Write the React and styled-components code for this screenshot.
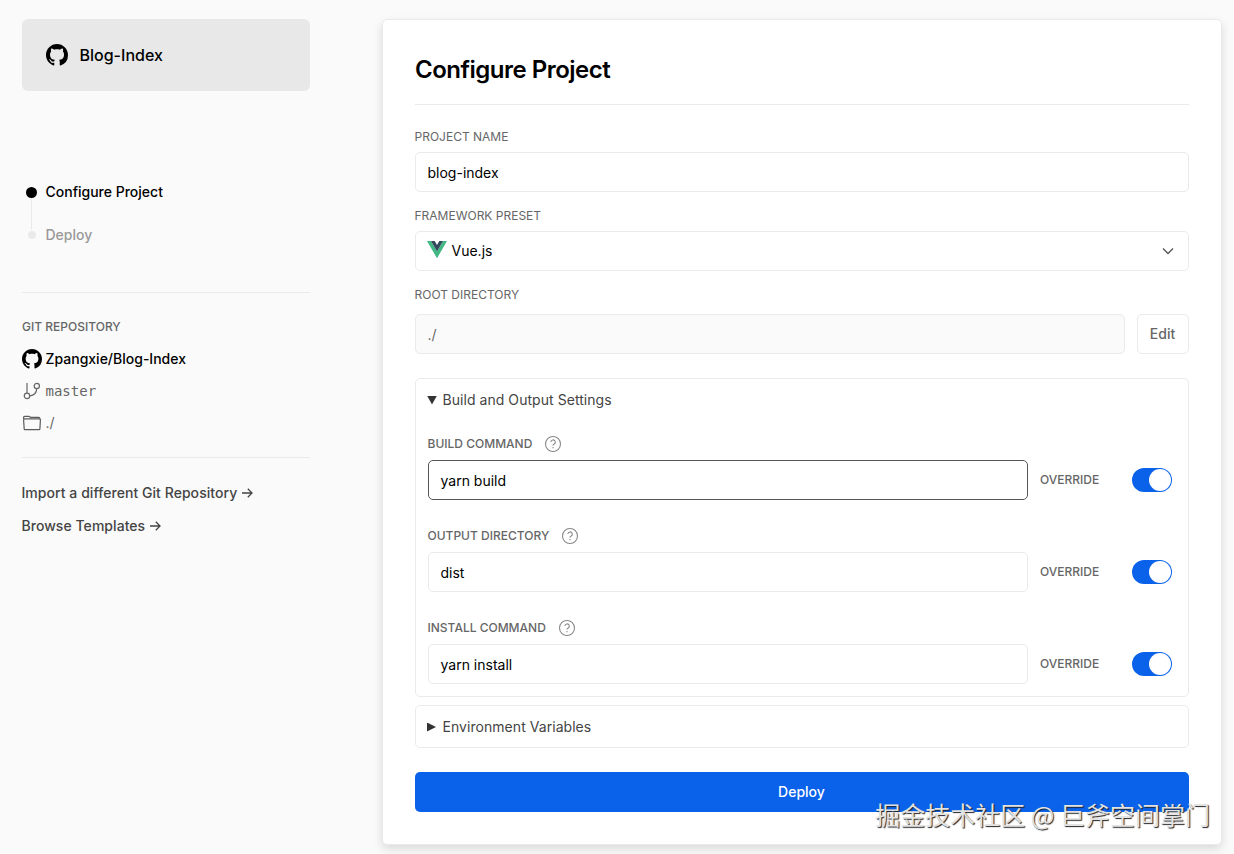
import React from "react";
import styled, { createGlobalStyle } from "styled-components";

const GithubIcon = ({ size }) => (
  <svg width={size} height={size} viewBox="0 0 16 16" fill="#000">
    <path
      fillRule="evenodd"
      d="M8 0C3.58 0 0 3.58 0 8c0 3.54 2.29 6.53 5.47 7.59.4.07.55-.17.55-.38 0-.19-.01-.82-.01-1.49-2.01.37-2.53-.49-2.69-.94-.09-.23-.48-.94-.82-1.13-.28-.15-.68-.52-.01-.53.63-.01 1.08.58 1.23.82.72 1.21 1.87.87 2.33.66.07-.52.28-.87.51-1.07-1.78-.2-3.64-.89-3.64-3.95 0-.87.31-1.59.82-2.15-.08-.2-.36-1.02.08-2.12 0 0 .67-.21 2.2.82.64-.18 1.32-.27 2-.27s1.36.09 2 .27c1.53-1.04 2.2-.82 2.2-.82.44 1.1.16 1.92.08 2.12.51.56.82 1.27.82 2.15 0 3.07-1.87 3.75-3.65 3.95.29.25.54.73.54 1.48 0 1.07-.01 1.93-.01 2.2 0 .21.15.46.55.38A8.01 8.01 0 0 0 16 8c0-4.42-3.58-8-8-8z"
    />
  </svg>
);

const BranchIcon = () => (
  <svg width="20" height="20" viewBox="0 0 20 20" fill="none" stroke="#666" strokeWidth="1.2">
    <path d="M5 2v10.2M14.7 7.6c-.2 4.2-2.6 6.8-6.8 7.2" />
    <circle cx="14.8" cy="5" r="2.6" />
    <circle cx="5" cy="14.9" r="2.7" />
  </svg>
);

const FolderIcon = () => (
  <svg width="20" height="20" viewBox="0 0 20 20" fill="none" stroke="#5c5c5c" strokeWidth="1.2">
    <path d="M1.6 6V4.4q0-1.1 1.1-1.1h4.2l1.6 1h8.2q1.1 0 1.1 1.1V6" />
    <path d="M2.2 15.9L1.6 7q0-1.1 1.1-1.1h14.7q1.1 0 1 1.1l-.5 8.9q0 .8-.9.8H3.1q-.9 0-.9-.8z" />
  </svg>
);

const ArrowIcon = () => (
  <svg width="12" height="12" viewBox="0 0 12 12" fill="none" stroke="#444" strokeWidth="1.3">
    <path d="M1 6h10M6.8 1.8L11 6l-4.2 4.2" />
  </svg>
);

const VueIcon = () => (
  <svg width="20" height="18" viewBox="0 0 20 18">
    <path fill="#41b883" d="M0 0h4l6 10.4L16 0h4L10 17.3z" />
    <path fill="#35495e" d="M4 0h3.7L10 4l2.3-4H16l-6 10.4z" />
  </svg>
);

const ChevronIcon = () => (
  <svg width="12" height="12" viewBox="0 0 12 12" fill="none" stroke="#555" strokeWidth="1.3">
    <path d="M1 3.5l5 5 5-5" />
  </svg>
);

const HelpIcon = () => (
  <svg width="18" height="18" viewBox="0 0 18 18" fill="none" stroke="#888" strokeWidth="1.1">
    <circle cx="9" cy="9" r="7.5" />
    <path d="M6.9 7.1a2.2 2.2 0 1 1 3.3 1.9c-.8.4-1.2.8-1.2 1.5" />
    <path d="M9 11.9v1.3" />
  </svg>
);

const settings = [
  { label: "BUILD COMMAND", value: "yarn build", focused: true },
  { label: "OUTPUT DIRECTORY", value: "dist" },
  { label: "INSTALL COMMAND", value: "yarn install" },
];

const Setting = ({ data }) => (
  <SettingContainer>
    <SettingLabel>
      <span>{data.label}</span>
      <HelpIcon />
    </SettingLabel>
    <SettingRow>
      <Field $focused={data.focused}>{data.value}</Field>
      <Override>OVERRIDE</Override>
      <Toggle>
        <Knob />
      </Toggle>
    </SettingRow>
  </SettingContainer>
);

const Sidebar = () => (
  <SidebarContainer>
    <RepoBox>
      <GithubIcon size={22} />
      <span>Blog-Index</span>
    </RepoBox>
    <Steps>
      <Step $active>
        <DotWrapper>
          <Dot $active />
        </DotWrapper>
        <span>Configure Project</span>
      </Step>
      <StepLine />
      <Step>
        <DotWrapper>
          <Dot />
        </DotWrapper>
        <span>Deploy</span>
      </Step>
    </Steps>
    <RepoInfo>
      <RepoHeading>GIT REPOSITORY</RepoHeading>
      <RepoName>
        <GithubIcon size={20} />
        <span>Zpangxie/Blog-Index</span>
      </RepoName>
      <RepoMeta>
        <BranchIcon />
        <Branch>master</Branch>
      </RepoMeta>
      <RepoMeta>
        <FolderIcon />
        <span>./</span>
      </RepoMeta>
    </RepoInfo>
    <Links>
      <SideLink>
        <span>Import a different Git Repository</span>
        <ArrowIcon />
      </SideLink>
      <SideLink>
        <span>Browse Templates</span>
        <ArrowIcon />
      </SideLink>
    </Links>
  </SidebarContainer>
);

const App = () => (
  <Page>
    <GlobalStyle />
    <Sidebar />
    <Card>
      <Title>Configure Project</Title>
      <Label>PROJECT NAME</Label>
      <Field>blog-index</Field>
      <Label>FRAMEWORK PRESET</Label>
      <Select>
        <VueIcon />
        <span>Vue.js</span>
        <ChevronIcon />
      </Select>
      <Label>ROOT DIRECTORY</Label>
      <DirectoryRow>
        <Field $disabled>./</Field>
        <EditButton>Edit</EditButton>
      </DirectoryRow>
      <SettingsPanel>
        <Summary>
          <Triangle $open />
          <span>Build and Output Settings</span>
        </Summary>
        {settings.map((item) => (
          <Setting key={item.label} data={item} />
        ))}
      </SettingsPanel>
      <EnvPanel>
        <Summary>
          <Triangle />
          <span>Environment Variables</span>
        </Summary>
      </EnvPanel>
      <DeployButton>Deploy</DeployButton>
    </Card>
    <Watermark>掘金技术社区 @ 巨斧空间掌门</Watermark>
  </Page>
);

export default App;

const GlobalStyle = createGlobalStyle`
  * {
    box-sizing: border-box;
  }
  body {
    margin: 0;
    background: #fafafa;
    font-family: Inter, "Liberation Sans", sans-serif;
    font-size: 14px;
    overflow: hidden;
  }
  svg {
    display: block;
    flex: none;
  }
`;

const Page = styled.div`
  position: relative;
  display: flex;
  align-items: flex-start;
  gap: 72px;
  width: 1234px;
  height: 854px;
  padding: 19px 12px 0 22px;
  overflow: hidden;
`;

const SidebarContainer = styled.aside`
  width: 288px;
  flex: none;
`;

const RepoBox = styled.div`
  display: flex;
  align-items: center;
  gap: 11.5px;
  height: 72px;
  padding-left: 24px;
  border-radius: 6px;
  background: #e8e8e8;
  font-size: 16px;
  font-weight: 500;
`;

const Steps = styled.div`
  height: 202px;
  padding-top: 91px;
  border-bottom: 1px solid #eaeaea;
`;

const Step = styled.div`
  display: flex;
  align-items: center;
  gap: 4.5px;
  height: 20px;
  font-weight: 500;
  color: ${(props) => (props.$active ? "#000" : "#999")};

  span {
    padding-bottom: 2px;
  }
`;

const DotWrapper = styled.div`
  display: flex;
  justify-content: center;
  width: 19px;
`;

const Dot = styled.div`
  width: ${(props) => (props.$active ? 11 : 8)}px;
  height: ${(props) => (props.$active ? 11 : 8)}px;
  border-radius: 50%;
  background: ${(props) => (props.$active ? "#000" : "#eaeaea")};
`;

const StepLine = styled.div`
  width: 1px;
  height: 33px;
  margin: -5px 0 -5px 9px;
  background: #eaeaea;
`;

const RepoInfo = styled.div`
  display: flex;
  flex-direction: column;
  gap: 12px;
  height: 165px;
  padding-top: 24px;
  border-bottom: 1px solid #eaeaea;
`;

const RepoHeading = styled.div`
  font-size: 12px;
  line-height: 20px;
  font-weight: 500;
  color: #666;
`;

const RepoName = styled.div`
  display: flex;
  align-items: center;
  gap: 3.5px;
  height: 20px;
  font-weight: 500;

  span {
    padding-bottom: 2px;
  }
`;

const RepoMeta = styled(RepoName)`
  font-weight: 400;
  color: #666;
`;

const Branch = styled.span`
  && {
    padding-bottom: 0;
  }
  font-family: "DejaVu Sans Mono", monospace;
`;

const Links = styled.div`
  display: flex;
  flex-direction: column;
  gap: 13px;
  padding-top: 25px;
`;

const SideLink = styled.a`
  display: flex;
  align-items: center;
  gap: 4px;
  height: 20px;
  font-weight: 500;
  letter-spacing: 0.05px;
  color: #444;

  span {
    margin-left: -0.5px;
    padding-bottom: 2px;
  }
`;

const Card = styled.main`
  width: 840px;
  height: 826px;
  flex: none;
  padding: 32px 32px 0;
  border: 1px solid #eaeaea;
  border-radius: 5px;
  background: #fff;
  box-shadow: 0 4px 10px rgba(0, 0, 0, 0.13);
`;

const Title = styled.h1`
  height: 53px;
  margin: 0 0 22px;
  border-bottom: 1px solid #eaeaea;
  font-size: 24px;
  line-height: 36px;
  font-weight: 600;
  letter-spacing: -0.5px;
`;

const Label = styled.div`
  height: 39px;
  padding-top: 14px;
  font-size: 12px;
  line-height: 20px;
  color: #666;
  text-indent: -0.5px;

  ${Title} + & {
    height: 25px;
    padding-top: 0;
  }
`;

const Field = styled.div`
  display: flex;
  align-items: center;
  flex: 1;
  height: 40px;
  padding: 0 11.5px;
  border: 1px solid ${(props) => (props.$focused ? "#555" : "#eaeaea")};
  border-radius: 5px;
  background: ${(props) => (props.$disabled ? "#fafafa" : "#fff")};
  color: ${(props) => (props.$disabled ? "#666" : "#000")};
`;

const Select = styled.div`
  display: flex;
  align-items: center;
  height: 40px;
  padding: 0 14px 0 11px;
  border: 1px solid #eaeaea;
  border-radius: 5px;

  svg:first-child {
    margin-bottom: 2px;
  }
  span {
    flex: 1;
    padding: 0 0 2px 4.5px;
  }
`;

const DirectoryRow = styled.div`
  display: flex;
  gap: 12px;
  padding-top: 4px;
`;

const EditButton = styled.button`
  width: 52px;
  height: 40px;
  padding: 0 1px 2px 0;
  border: 1px solid #eaeaea;
  border-radius: 5px;
  background: #fff;
  color: #666;
  font: 500 14px Inter, sans-serif;
`;

const SettingsPanel = styled.section`
  height: 319px;
  margin-top: 24px;
  padding: 0 16px 0 12px;
  border: 1px solid #eaeaea;
  border-radius: 5px;
`;

const Summary = styled.div`
  display: flex;
  align-items: center;
  gap: 5.5px;
  height: 42px;
  margin-left: -1px;
  letter-spacing: 0.05px;
  color: #444;

  span {
    padding-bottom: 2px;
  }
`;

const Triangle = styled.i`
  width: 10px;
  height: 9px;
  background: #333;
  clip-path: ${(props) =>
    props.$open ? "polygon(0 0, 100% 0, 50% 100%)" : "polygon(0 0, 90% 50%, 0 100%)"};
`;

const SettingContainer = styled.div`
  height: 92px;
`;

const SettingLabel = styled.div`
  display: flex;
  align-items: center;
  gap: 12px;
  height: 39px;
  padding-top: 7px;
  font-size: 12px;
  font-weight: 500;
  color: #666;

  span {
    margin-left: -0.5px;
    padding-bottom: 2px;
  }
`;

const SettingRow = styled.div`
  display: flex;
  align-items: center;
`;

const Override = styled.div`
  width: 104px;
  padding: 0 0 2px 12px;
  font-size: 12px;
  font-weight: 500;
  color: #666;
`;

const Toggle = styled.div`
  display: flex;
  justify-content: flex-end;
  width: 40px;
  height: 24px;
  padding: 1px;
  border-radius: 12px;
  background: #0a62eb;
`;

const Knob = styled.div`
  width: 22px;
  height: 22px;
  border-radius: 50%;
  background: #fff;
`;

const EnvPanel = styled.section`
  height: 43px;
  margin-top: 8px;
  padding: 0 12px;
  border: 1px solid #eaeaea;
  border-radius: 5px;
`;

const DeployButton = styled.button`
  display: block;
  width: 100%;
  height: 40px;
  margin-top: 24px;
  padding: 0 1px 2px 0;
  border: 0;
  border-radius: 5px;
  background: #0a62eb;
  color: #fff;
  font: 500 14px Inter, sans-serif;
`;

/* sits over the bottom right corner of the page */
const Watermark = styled.div`
  position: absolute;
  right: 24px;
  bottom: 22px;
  font-family: "Noto Sans CJK SC", sans-serif;
  font-size: 25px;
  line-height: 36px;
  white-space: nowrap;
  color: #e2e2e2;
  text-shadow: 1px 1px 1px #222;
`;
